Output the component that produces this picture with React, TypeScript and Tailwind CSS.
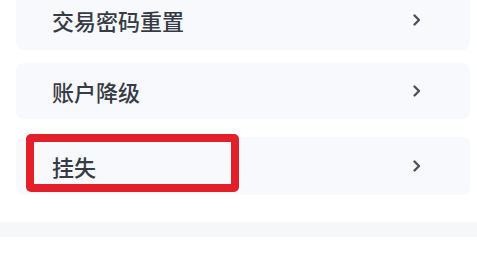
import React from "react";

const Chevron = () => (
  <svg width="10" height="14" viewBox="0 0 10 14" className="shrink-0">
    <path d="M2.5 2.5 L7 7 L2.5 11.5" fill="none" stroke="#4a5262" strokeWidth="2.4" strokeLinecap="round" strokeLinejoin="round" />
  </svg>
);

const Row = ({ label, className, children }: { label: string; className: string; children?: React.ReactNode }) => (
  <div className={`relative flex items-center justify-between rounded-lg bg-[#f8f9fc] pl-[36px] pr-[48px] ${className}`}>
    <span className="text-[22px] font-medium leading-none text-[#363b45]">{label}</span>
    <Chevron />
    {children}
  </div>
);

export default function App() {
  return (
    <div
      className="h-[261px] w-[477px] overflow-hidden bg-white"
      style={{ fontFamily: '"Noto Sans CJK SC", "Noto Sans", sans-serif' }}
    >
      <div className="flex flex-col pl-[16px] pr-[7px]">
        <Row label="交易密码重置" className="mt-[-10px] h-[60px]" />
        <Row label="账户降级" className="mt-[13px] h-[56px]" />
        <Row label="挂失" className="mt-[18px] h-[58px]">
          <div className="absolute left-[10px] top-[-3px] h-[58px] w-[213px] rounded-[5px] border-[8px] border-[#e3202a]" />
        </Row>
      </div>
      <div className="mt-[27px] h-[15px] w-full bg-[#f6f7f9]" />
    </div>
  );
}
